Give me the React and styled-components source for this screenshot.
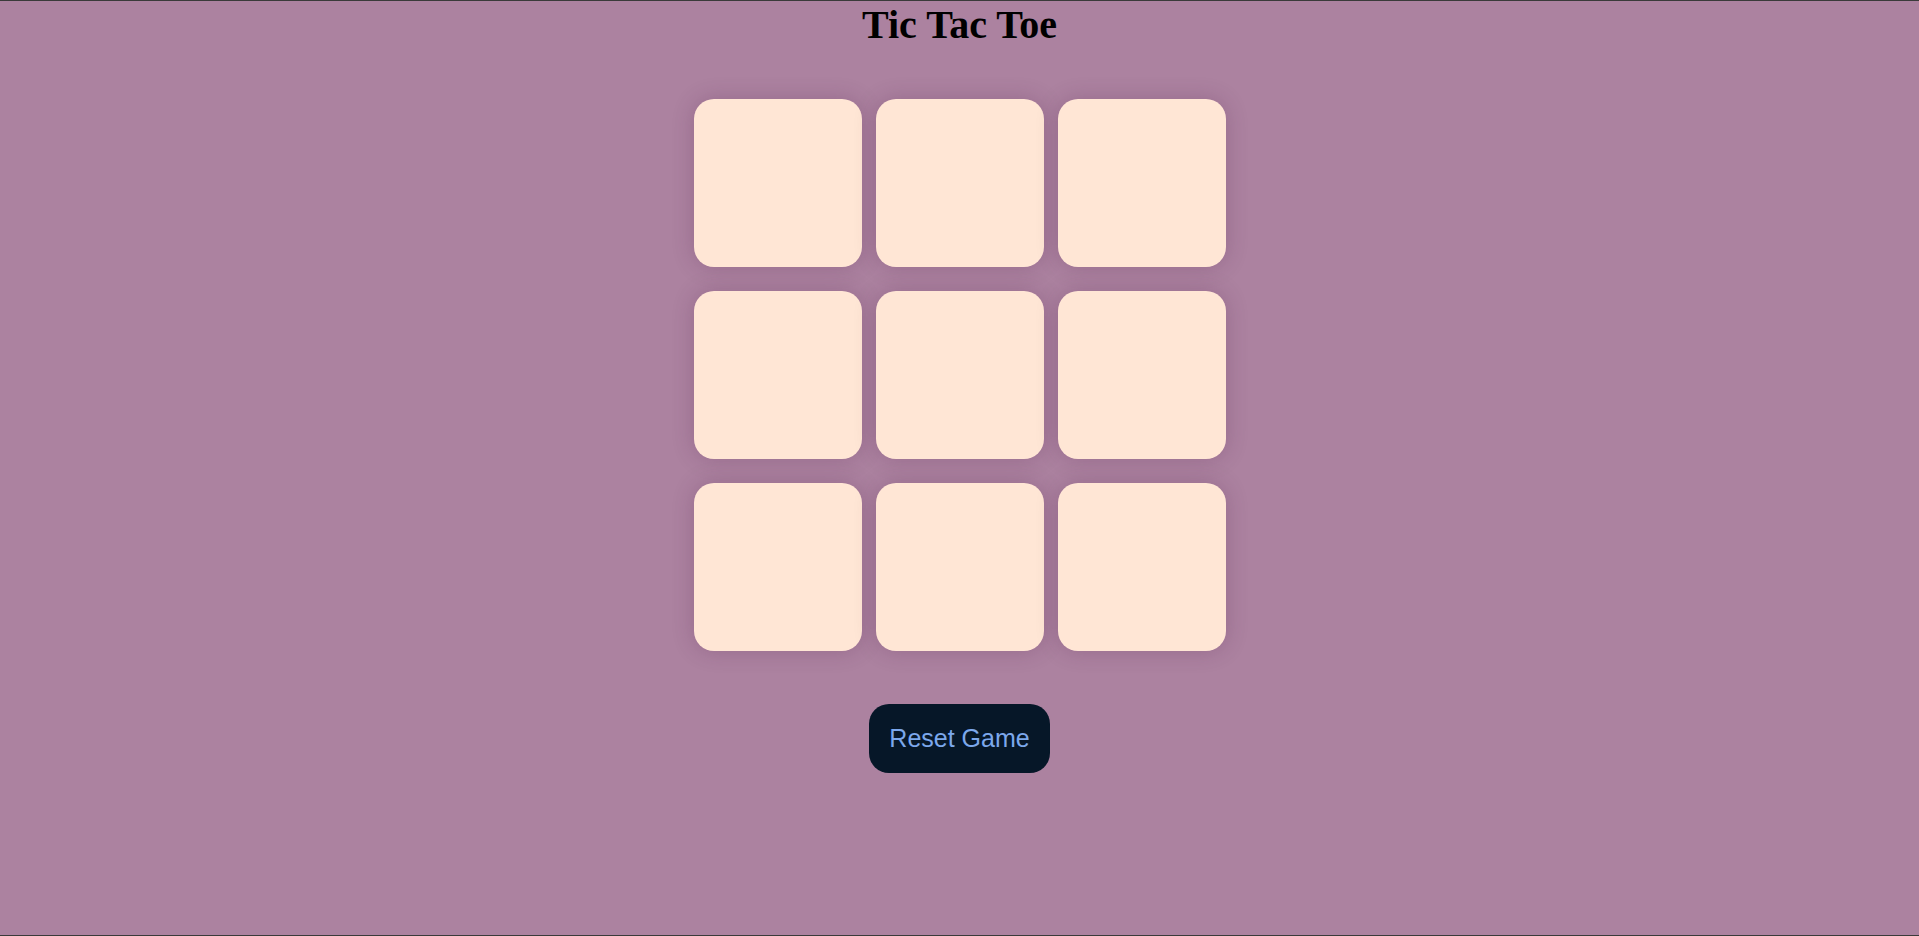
import React, { useState } from "react";
import styled, { createGlobalStyle } from "styled-components";

const GlobalStyle = createGlobalStyle`
  html, body {
    margin: 0;
    padding: 0;
  }
  body {
    background-color: #ac82a0;
    font-family: "Liberation Serif", "Times New Roman", serif;
  }
`;

const Page = styled.div`
  min-height: 100vh;
  box-sizing: border-box;
  border-top: 1px solid #3a3a3a;
  border-bottom: 1px solid #3a3a3a;
  display: flex;
  flex-direction: column;
  align-items: center;
`;

const Title = styled.h1`
  margin: 0;
  font-size: 40px;
  font-weight: bold;
  color: #000;
`;

const Board = styled.div`
  display: grid;
  grid-template-columns: repeat(3, 168px);
  grid-auto-rows: 168px;
  column-gap: 14px;
  row-gap: 24px;
  margin-top: 51px;
`;

const Cell = styled.button`
  border: none;
  border-radius: 20px;
  background-color: #ffe6d5;
  box-shadow: 0 0 22px rgba(80, 30, 70, 0.24);
  font-family: "Liberation Sans", Arial, sans-serif;
  font-size: 72px;
  font-weight: bold;
  color: ${(p) => (p.mark === "X" ? "#061728" : "#ac4f7f")};
  cursor: pointer;
  padding: 0;
`;

const ResetButton = styled.button`
  margin-top: 53px;
  padding: 20px 20px;
  border: none;
  border-radius: 20px;
  background-color: #061728;
  color: #7ca8ec;
  font-family: "Liberation Sans", Arial, sans-serif;
  font-size: 25px;
  line-height: normal;
  cursor: pointer;
`;

const App = () => {
  const [cells, setCells] = useState(Array(9).fill(null));
  const [turn, setTurn] = useState("X");

  const play = (i) => {
    if (cells[i]) return;
    const next = cells.slice();
    next[i] = turn;
    setCells(next);
    setTurn(turn === "X" ? "O" : "X");
  };

  const reset = () => {
    setCells(Array(9).fill(null));
    setTurn("X");
  };

  return (
    <>
      <GlobalStyle />
      <Page>
        <Title>Tic Tac Toe</Title>
        <Board>
          {cells.map((c, i) => (
            <Cell key={i} mark={c} onClick={() => play(i)}>
              {c}
            </Cell>
          ))}
        </Board>
        <ResetButton onClick={reset}>Reset Game</ResetButton>
      </Page>
    </>
  );
};

export default App;
